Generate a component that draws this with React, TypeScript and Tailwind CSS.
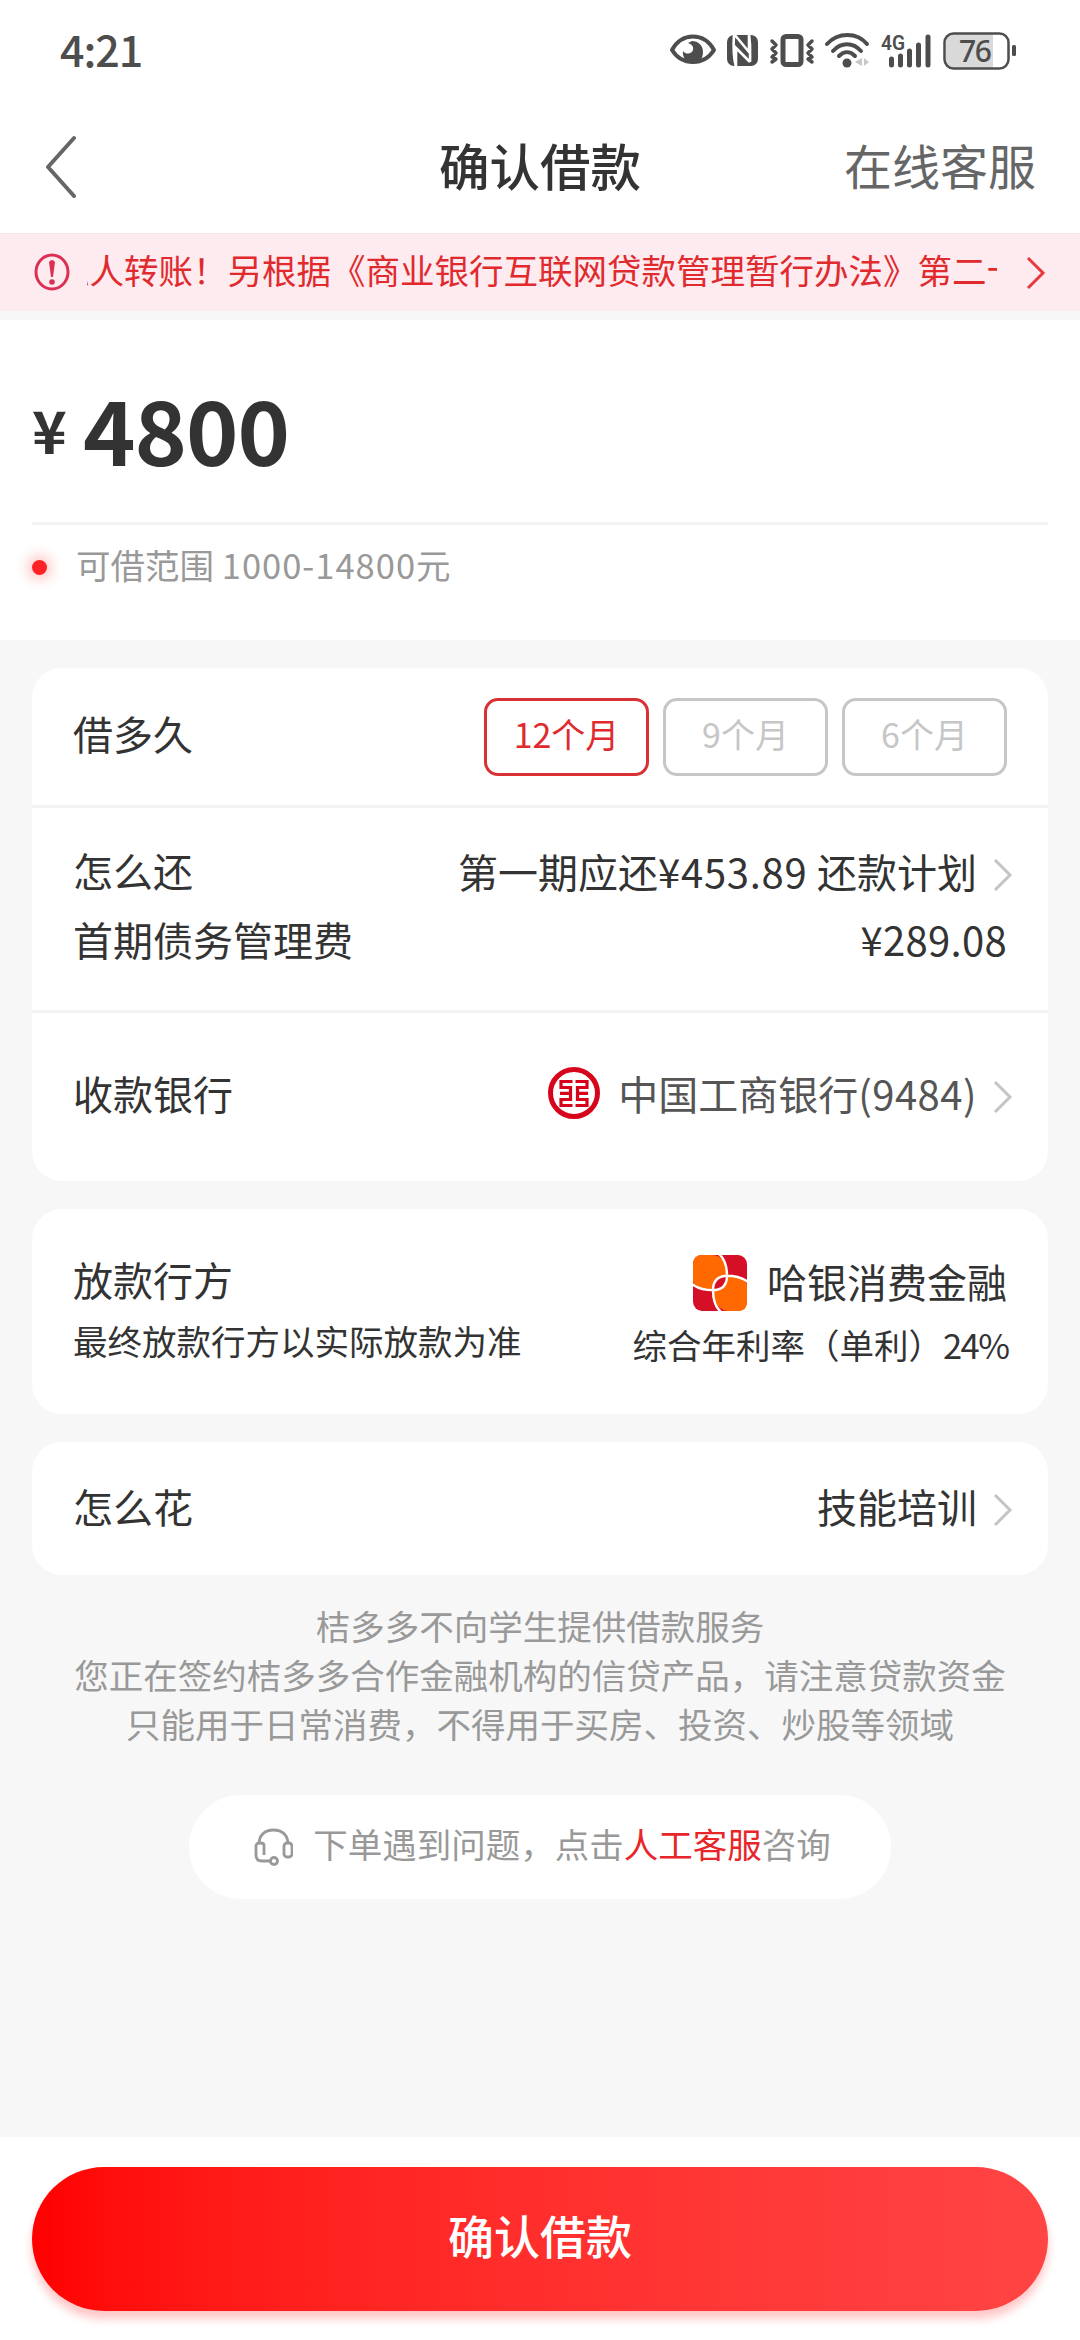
import type { ReactNode } from "react"

const terms = [
  { label: "12个月", active: true },
  { label: "9个月", active: false },
  { label: "6个月", active: false },
]

function StatusIcons() {
  return (
    <svg width="346" height="44" viewBox="0 0 346 44" fill="#4d4d4d" className="overflow-visible">
      {/* eye */}
      <path d="M2 22C12 4 34 4 44 22C34 38 12 38 2 22Z" fill="none" stroke="#4d4d4d" strokeWidth="4" strokeLinejoin="round" />
      <path d="M22 13C28 13 33 17 33 24C33 31 29 35 23 35C17 35 12 30 13 23C16 27 22 26 23 22C24 18 21 16 18 15Z" />
      {/* nfc */}
      <rect x="57" y="7" width="31" height="31" rx="7" />
      <path d="M66 39V20L80 34M64 6L79 24V6M66 39C64 32 63 22 64 6M79 6C81 20 80 28 80 34" fill="none" stroke="#fff" strokeWidth="2.600" />
      {/* vibrate */}
      <rect x="113" y="8.500" width="18" height="28" rx="3" fill="none" stroke="#4d4d4d" strokeWidth="5" />
      <path d="M102 13l4 4-4 4 4 4-4 4 4 2-4 3M142 13l-4 4 4 4-4 4 4 4-4 2 4 3" fill="none" stroke="#4d4d4d" strokeWidth="3.500" strokeLinejoin="round" strokeLinecap="round" />
      {/* wifi */}
      <path d="M157 16C168 4 187 4 197 16M163 23C171 14 183 14 191 23M169 28C174 23 180 23 185 28" fill="none" stroke="#4d4d4d" strokeWidth="4" strokeLinecap="round" />
      <circle cx="177" cy="35" r="4.500" />
      <path d="M192 30v8l-7-4zM194 30v8l5-4z" fill="#c8c8c8" />
      {/* signal */}
      <path d="M221.500 31v6M230.500 28v9M239.500 23v14M248.500 17v20M258 9v28" stroke="#4d4d4d" strokeWidth="5" strokeLinecap="round" />
      <text x="211" y="22" fontFamily="Roboto" fontWeight="600" fontSize="20" textLength="24" lengthAdjust="spacingAndGlyphs">4G</text>
      {/* battery */}
      <path d="M282 6H323V40H282Q276 40 276 34V12Q276 6 282 6Z" fill="#d9d9d9" />
      <rect x="274.500" y="5.500" width="64" height="35" rx="9" fill="none" stroke="#4d4d4d" strokeWidth="2.500" />
      <rect x="342" y="17" width="4" height="11" rx="1.500" />
      <text x="289" y="33.500" fontFamily="Noto Sans" fontWeight="500" fontSize="30" textLength="33">76</text>
    </svg>
  )
}

function Chevron({ className = "mt-[8px] text-[#c4c4c4]" }: { className?: string }) {
  return (
    <svg width="20" height="34" viewBox="0 0 20 34" fill="none" stroke="currentColor" strokeWidth="3" className={className}>
      <path d="M2 2L17 17L2 32" />
    </svg>
  )
}

function IcbcLogo() {
  return (
    <svg width="52" height="52" viewBox="0 0 52 52" fill="none" stroke="#d7051b">
      <circle cx="26" cy="26" r="23.500" strokeWidth="5" />
      <path d="M24.500 14.500H13V20.500H22.500V26.300H12M22.500 26.300V32.500H13V38.500H24.500M27.500 14.500H39V20.500H29.500V26.300H40M29.500 26.300V32.500H39V38.500H27.500" strokeWidth="3.200" />
    </svg>
  )
}

function LenderLogo() {
  return (
    <svg width="54" height="56" viewBox="0 0 54 54" preserveAspectRatio="none">
      <rect width="54" height="54" rx="9" fill="#d50f25" />
      <path d="M9 0H20C30 1 34 10 34 20Q34 33 21 34C10 34 3 31 0 26V9Q0 0 9 0Z" fill="#ff6900" />
      <path d="M54 28V45Q54 54 45 54H34C24 52 20 44 20 34Q20 21 33 20C44 20 51 23 54 28Z" fill="#ff6900" />
      <path d="M21 34Q20 21 33 20L34 20Q34 33 21 34Z" fill="#d50f25" />
      <path d="M26 -1C32 4 34 11 34 20Q34 33 21 34C11 34 4 32 -1 28M55 26C50 22 43 20 33 20Q20 21 20 34C20 43 22 50 28 55" fill="none" stroke="#fff" strokeWidth="2.400" />
    </svg>
  )
}

function HeadsetIcon() {
  return (
    <svg width="40" height="40" viewBox="0 0 40 40" fill="none" stroke="#999" strokeWidth="2.800">
      <path d="M6 17C6 8 12 3 20.500 3S35 8 35 17" />
      <path d="M11 28V18Q11 16 7 16Q3 16 3 19V28Q3 34 9 34H17" />
      <rect x="31" y="16" width="8" height="14" rx="3" />
      <circle cx="21" cy="34" r="3.500" />
    </svg>
  )
}

function Card({ children }: { children: ReactNode }) {
  return <section className="rounded-[30px] bg-white text-[40px] leading-[40px] text-[#333]">{children}</section>
}

export default function App() {
  return (
    <div className="flex h-[2340px] w-[1080px] flex-col overflow-hidden bg-[#f7f7f7] font-['Noto_Sans_CJK_SC',sans-serif]">
      <header className="h-[233px] bg-white">
        <div className="flex h-[100px] items-center justify-between pr-[64px] pl-[60px]">
          <span className="pb-[3px] text-[43px] leading-none font-medium tracking-[-1px] text-[#4d4d4d]">4:21</span>
          <StatusIcons />
        </div>
        <div className="grid h-[133px] grid-cols-[1fr_auto_1fr] items-center pr-[44px] pb-[1px] pl-[44px]">
          <svg width="34" height="64" viewBox="0 0 34 64" fill="none" stroke="#666" strokeWidth="4" strokeLinecap="round" strokeLinejoin="round">
            <path d="M30 4L4 33L30 62" />
          </svg>
          <h1 className="pb-[3px] text-[50.500px] leading-none font-medium text-[#333]">确认借款</h1>
          <span className="justify-self-end pb-[5px] text-[48px] leading-none text-[#666]">在线客服</span>
        </div>
      </header>

      <div className="flex h-[78px] shrink-0 items-center border-t border-[#f3e6ea] bg-[#feebf0] pr-[32px] pl-[34px] text-[#e02a2e]">
        <svg width="36" height="40" viewBox="0 0 36 40" fill="none" stroke="#dc3052" className="mb-[2px]">
          <ellipse cx="18" cy="20" rx="16" ry="17" strokeWidth="3" />
          <path d="M15 10Q18 6 21 10L19 25H17Z" fill="#dc3052" stroke="none" />
          <circle cx="18" cy="30" r="2.800" fill="#dc3052" stroke="none" />
        </svg>
        <div className="mb-[7px] ml-[17px] flex h-[50px] w-[910px] items-center justify-start overflow-hidden text-[34.500px] leading-[50px] whitespace-nowrap">
          <span className="ml-[-32px]">私人转账！另根据《商业银行互联网贷款管理暂行办法》第二十</span>
        </div>
        <Chevron className="ml-[29px] text-[#e8383d]" />
      </div>

      <section className="mt-[9px] h-[320px] shrink-0 bg-white px-8">
        <div className="flex h-[205px] items-center border-b-3 border-[#f2f2f2] pt-[12px] font-bold text-[#333]">
          <span className="w-[51px] pt-[2px] text-[59px] leading-none">¥</span>
          <span className="text-[89px] leading-none tracking-[-1px]">4800</span>
        </div>
        <div className="flex h-[84px] items-center gap-[29px]">
          <i className="size-[15px] rounded-full bg-[#fd2226] shadow-[0_0_14px_4px_#ff000040]" />
          <span className="pb-[5px] text-[34.500px] leading-none text-[#999]">
            可借范围 <span className="tracking-[1px]">1000-14800</span>元
          </span>
        </div>
      </section>

      <main className="flex grow flex-col gap-7 px-8 pt-7">
        <Card>
          <div className="flex h-[140px] items-center justify-between border-b-3 border-[#f2f2f2] px-[41px]">
            <span className="pb-[7px]">借多久</span>
            <div className="flex gap-[14px] text-[34px]">
              {terms.map((term) => (
                <button
                  key={term.label}
                  className={
                    term.active
                      ? "h-[78px] w-[165px] rounded-[14px] border-3 border-[#d93034] pb-[5px] text-[#e02a2e]"
                      : "h-[78px] w-[165px] rounded-[14px] border-3 border-[#c6c6c6] pb-[5px] text-[#c6c6c6]"
                  }
                >
                  {term.label}
                </button>
              ))}
            </div>
          </div>
          <div className="flex h-[205px] flex-col gap-[27px] border-b-3 border-[#f2f2f2] px-[41px] pt-[42px]">
            <div className="flex justify-between">
              <span>怎么还</span>
              <div className="-mr-[6px] flex items-center gap-4">
                <span>
                  第一期应还<span className="tracking-[0.700px]">¥453.89 </span>还款计划
                </span>
                <Chevron />
              </div>
            </div>
            <div className="flex justify-between">
              <span>首期债务管理费</span>
              <span className="tracking-[0.300px]">¥289.08</span>
            </div>
          </div>
          <div className="flex h-[168px] items-center justify-between pr-[35px] pb-[8px] pl-[41px]">
            <span>收款银行</span>
            <div className="flex items-center text-[#555]">
              <IcbcLogo />
              <span className="mr-4 ml-[18px]">
                中国工商银行<span className="tracking-[0.500px]">(9484)</span>
              </span>
              <Chevron />
            </div>
          </div>
        </Card>

        <Card>
          <div className="flex h-[205px] justify-between px-[41px]">
            <div className="flex flex-col pt-[50px]">
              <span>放款行方</span>
              <span className="mt-[21px] text-[34.500px]">最终放款行方以实际放款为准</span>
            </div>
            <div className="flex flex-col items-end pt-[46px]">
              <div className="flex items-center gap-5">
                <LenderLogo />
                <span className="pb-[5px]">哈银消费金融</span>
              </div>
              <span className="mt-[13px] text-[34.500px] whitespace-nowrap">
                综合年利率（单利）<span className="-mr-[1.500px] tracking-[-1.500px]">24%</span>
              </span>
            </div>
          </div>
        </Card>

        <Card>
          <div className="flex h-[133px] items-center justify-between pr-[35px] pb-[5px] pl-[41px]">
            <span>怎么花</span>
            <div className="flex items-center gap-4">
              <span>技能培训</span>
              <Chevron />
            </div>
          </div>
        </Card>

        <p className="-mt-[2px] text-center text-[34.500px] leading-[49px] text-[#999]">
          桔多多不向学生提供借款服务
          <br />
          您正在签约桔多多合作金融机构的信贷产品，请注意贷款资金
          <br />
          只能用于日常消费，不得用于买房、投资、炒股等领域
        </p>

        <div className="mt-[19px] flex h-[104px] w-[702px] items-center justify-center gap-5 self-center rounded-full bg-white pl-[4px] text-[34.500px] text-[#999]">
          <HeadsetIcon />
          <span className="pb-[7px] leading-none">
            下单遇到问题，点击<span className="text-[#e8262a]">人工客服</span>咨询
          </span>
        </div>
      </main>

      <footer className="h-[203px] shrink-0 bg-white px-8 pt-[30px]">
        <button className="h-[144px] w-full rounded-full bg-linear-to-r from-[#ff0000] to-[#ff4444] pb-[9px] text-[46px] font-medium text-white shadow-[0_8px_10px_#ff00003a]">
          确认借款
        </button>
      </footer>
    </div>
  )
}
